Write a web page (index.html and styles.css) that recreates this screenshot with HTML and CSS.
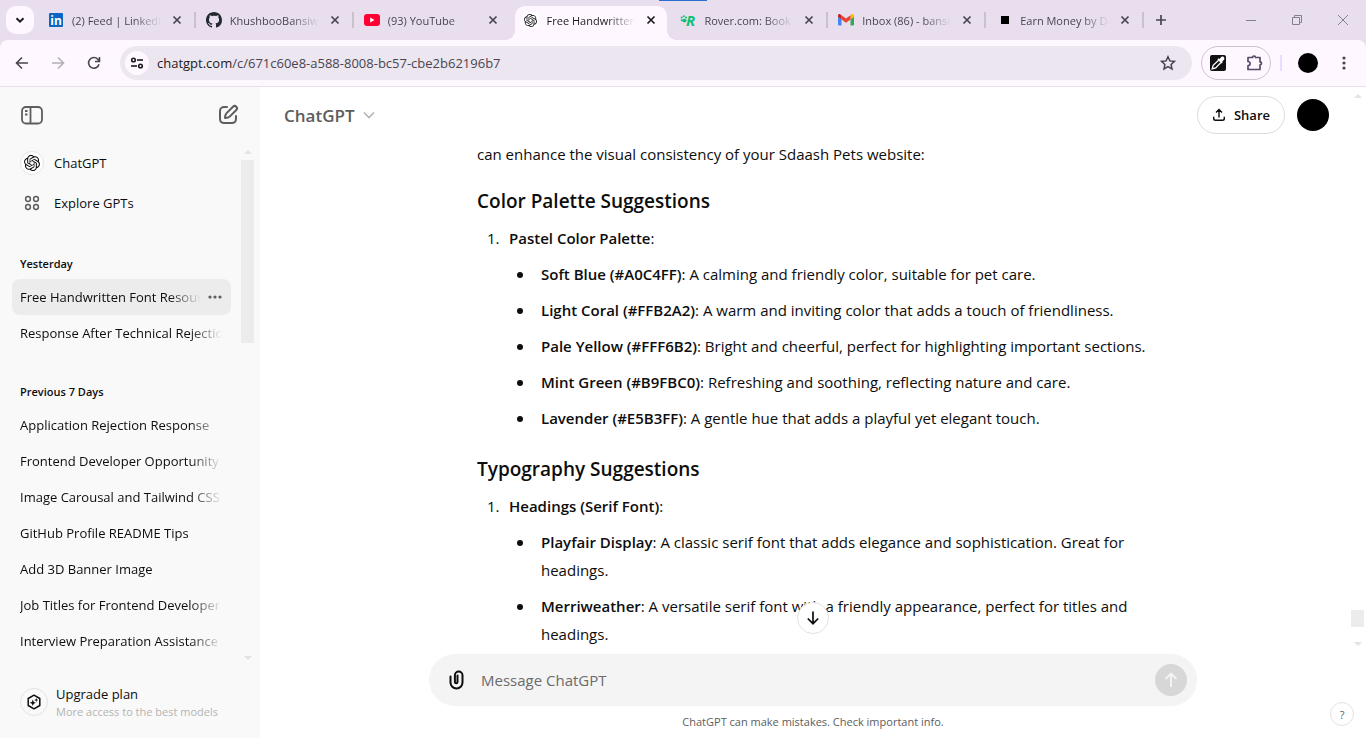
FILE: index.html
```html
<!DOCTYPE html>
<html lang="en">
<head>
<meta charset="utf-8">
<title>ChatGPT</title>
<link rel="stylesheet" href="styles.css">
</head>
<body>
<svg class="defs" aria-hidden="true">
  <symbol id="knot" viewBox="0 0 24 24"><path fill="currentColor" d="M22.2819 9.8211a5.9847 5.9847 0 0 0-.5157-4.9108 6.0462 6.0462 0 0 0-6.5098-2.9A6.0651 6.0651 0 0 0 4.9807 4.1818a5.9847 5.9847 0 0 0-3.9977 2.9 6.0462 6.0462 0 0 0 .7427 7.0966 5.98 5.98 0 0 0 .511 4.9107 6.051 6.051 0 0 0 6.5146 2.9001A5.9847 5.9847 0 0 0 13.2599 24a6.0557 6.0557 0 0 0 5.7718-4.2058 5.9894 5.9894 0 0 0 3.9977-2.9001 6.0557 6.0557 0 0 0-.7475-7.0729zm-9.022 12.6081a4.4755 4.4755 0 0 1-2.8764-1.0408l.1419-.0804 4.7783-2.7582a.7948.7948 0 0 0 .3927-.6813v-6.7369l2.02 1.1686a.071.071 0 0 1 .038.052v5.5826a4.504 4.504 0 0 1-4.4945 4.4944zm-9.6607-4.1254a4.4708 4.4708 0 0 1-.5346-3.0137l.142.0852 4.783 2.7582a.7712.7712 0 0 0 .7806 0l5.8428-3.3685v2.3324a.0804.0804 0 0 1-.0332.0615L9.74 19.9502a4.4992 4.4992 0 0 1-6.1408-1.6464zM2.3408 7.8956a4.485 4.485 0 0 1 2.3655-1.9728V11.6a.7664.7664 0 0 0 .3879.6765l5.8144 3.3543-2.0201 1.1685a.0757.0757 0 0 1-.071 0l-4.8303-2.7865A4.504 4.504 0 0 1 2.3408 7.872zm16.5963 3.8558L13.1038 8.364 15.1192 7.2a.0757.0757 0 0 1 .071 0l4.8303 2.7913a4.4944 4.4944 0 0 1-.6765 8.1042v-5.6772a.79.79 0 0 0-.407-.667zm2.0107-3.0231l-.142-.0852-4.7735-2.7818a.7759.7759 0 0 0-.7854 0L9.409 9.2297V6.8974a.0662.0662 0 0 1 .0284-.0615l4.8303-2.7866a4.4992 4.4992 0 0 1 6.6802 4.66zM8.3065 12.863l-2.02-1.1638a.0804.0804 0 0 1-.038-.0567V6.0742a4.4992 4.4992 0 0 1 7.3757-3.4537l-.142.0805L8.704 5.459a.7948.7948 0 0 0-.3927.6813zm1.0976-2.3654l2.602-1.4998 2.6069 1.4998v2.9994l-2.5974 1.4997-2.6067-1.4997Z"/></symbol>
  <symbol id="cross" viewBox="0 0 16 16"><path d="M4.5 4.5l7 7M11.5 4.5l-7 7" fill="none" stroke="currentColor" stroke-width="1.7"/></symbol>
</svg>

<header class="browser">
  <div class="tabstrip">
    <button class="tab-search" aria-label="Search tabs"><svg width="10" height="10" viewBox="0 0 10 10"><path d="M1.5 3.2L5 6.700l3.500-3.500" fill="none" stroke="#1d1b20" stroke-width="2"/></svg></button>
    <div class="tabs">
      <div class="tab">
        <svg class="favicon" viewBox="0 0 16 16"><rect x="1" y="1" width="14" height="14" rx="1" fill="#0a66c2"/><text class="logo-in" x="8" y="12.500" text-anchor="middle">in</text></svg>
        <span class="tab-title">(2) Feed | LinkedIn</span><button class="tab-close" aria-label="Close tab"><svg width="16" height="16"><use href="#cross"/></svg></button>
      </div>
      <div class="tab">
        <svg class="favicon" viewBox="0 0 16 16"><path fill="#24292f" d="M8 0C3.580 0 0 3.580 0 8c0 3.540 2.290 6.530 5.470 7.590.4.070.550-.170.550-.380 0-.190-.010-.820-.010-1.490-2.010.370-2.530-.490-2.690-.940-.090-.230-.480-.940-.820-1.130-.280-.150-.680-.520-.010-.530.630-.010 1.080.580 1.230.820.720 1.210 1.870.870 2.330.660.070-.520.280-.870.510-1.070-1.780-.2-3.640-.890-3.640-3.950 0-.870.310-1.590.820-2.150-.080-.2-.360-1.020.080-2.120 0 0 .670-.210 2.200.820.640-.180 1.320-.270 2-.270s1.360.090 2 .270c1.530-1.040 2.200-.820 2.200-.820.440 1.100.160 1.920.080 2.120.510.560.820 1.270.820 2.150 0 3.070-1.870 3.750-3.650 3.950.290.250.540.730.540 1.480 0 1.070-.010 1.930-.010 2.200 0 .210.150.460.550.380A8.010 8.010 0 0 0 16 8c0-4.420-3.580-8-8-8z"/></svg>
        <span class="tab-title">KhushbooBansiwal</span><button class="tab-close" aria-label="Close tab"><svg width="16" height="16"><use href="#cross"/></svg></button>
      </div>
      <div class="tab plain">
        <svg class="favicon" viewBox="0 0 16 16"><rect x="0" y="2" width="16" height="12" rx="3" fill="#ff0033"/><path d="M6.200 5.500v5l4.300-2.500z" fill="#fff"/></svg>
        <span class="tab-title">(93) YouTube</span><button class="tab-close" aria-label="Close tab"><svg width="16" height="16"><use href="#cross"/></svg></button>
      </div>
      <div class="tab active">
        <span class="favicon knot-tile"><svg width="13" height="13"><use href="#knot"/></svg></span>
        <span class="tab-title">Free Handwritten Font</span><button class="tab-close" aria-label="Close tab"><svg width="16" height="16"><use href="#cross"/></svg></button>
      </div>
      <div class="tab">
        <svg class="favicon" viewBox="0 0 16 16"><g fill="#0fbf73"><ellipse cx="4.400" cy="8.600" rx="2.200" ry="1.800"/><circle cx="1.700" cy="8.200" r="1"/><circle cx="1.700" cy="5.500" r="1"/><circle cx="3.900" cy="4.300" r="1"/><circle cx="6" cy="5.400" r="1"/></g><text class="logo-r" x="6" y="13.500">R</text></svg>
        <span class="tab-title">Rover.com: Book Sitters</span><button class="tab-close" aria-label="Close tab"><svg width="16" height="16"><use href="#cross"/></svg></button>
      </div>
      <div class="tab">
        <svg class="favicon" viewBox="0 0 16 16"><path fill="#4285f4" d="M1 13.500h2.500V7.300L0 4.800v7.700a1 1 0 0 0 1 1z"/><path fill="#34a853" d="M12.500 13.500H15a1 1 0 0 0 1-1V4.800l-3.500 2.500z"/><path fill="#fbbc04" d="M12.500 3.200v4.200L16 4.800V3.700c0-1.500-1.500-2-2.400-1.300z"/><path fill="#ea4335" d="M3.500 7.400V3.200L8 6.500l4.500-3.300v4.200L8 10.700z"/><path fill="#c5221f" d="M0 3.700v1.100l3.500 2.600V3.200L2.400 2.400C1.300 1.700 0 2.400 0 3.700z"/></svg>
        <span class="tab-title">Inbox (86) - bansiwal</span><button class="tab-close" aria-label="Close tab"><svg width="16" height="16"><use href="#cross"/></svg></button>
      </div>
      <div class="tab">
        <svg class="favicon" viewBox="0 0 16 16"><rect x="5" y="4" width="8" height="8"/></svg>
        <span class="tab-title">Earn Money by Doing</span><button class="tab-close" aria-label="Close tab"><svg width="16" height="16"><use href="#cross"/></svg></button>
      </div>
    </div>
    <button class="new-tab" aria-label="New tab"><svg width="12" height="12" viewBox="0 0 12 12"><path d="M6 1v10M1 6h10" stroke="#49454f" stroke-width="1.700"/></svg></button>
    <div class="window-controls">
      <button aria-label="Minimize"><svg width="12" height="12" viewBox="0 0 12 12"><path d="M1 6.500h10" stroke="#85808a"/></svg></button>
      <button aria-label="Restore"><svg width="12" height="12" viewBox="0 0 12 12"><path d="M1.500 3.500h7v7h-7zM3.500 3.500v-2h7v7h-2" fill="none" stroke="#85808a"/></svg></button>
      <button aria-label="Close"><svg width="12" height="12" viewBox="0 0 12 12"><path d="M1 1l10 10M11 1L1 11" stroke="#85808a"/></svg></button>
    </div>
  </div>
  <div class="toolbar">
    <div class="nav">
      <button aria-label="Back"><svg width="16" height="16" viewBox="0 0 16 16"><path d="M14 8H3M8 2.500L2.500 8 8 13.500" fill="none" stroke="#49454f" stroke-width="1.600"/></svg></button>
      <button aria-label="Forward"><svg width="16" height="16" viewBox="0 0 16 16"><path d="M2 8h11M8 2.500L13.500 8 8 13.500" fill="none" stroke="#b3adb7" stroke-width="1.600"/></svg></button>
      <button aria-label="Reload"><svg width="16" height="16" viewBox="0 0 16 16"><path d="M13 9.200A5.300 5.300 0 1 1 11.800 4.300L13.400 6M13.500 2v4.500H9" fill="none" stroke="#49454f" stroke-width="1.600"/></svg></button>
    </div>
    <div class="omnibox">
      <button class="site-info" aria-label="Site information"><svg width="14" height="14" viewBox="0 0 14 14"><g fill="none" stroke="#1d1b20" stroke-width="1.600"><circle cx="3.500" cy="4" r="1.800"/><path d="M7 4h6"/><circle cx="10.500" cy="10" r="1.800"/><path d="M1 10h6"/></g></svg></button>
      <span class="url"><b>chatgpt.com</b>/c/671c60e8-a588-8008-bc57-cbe2b62196b7</span>
      <button class="star" aria-label="Bookmark this tab"><svg width="16" height="16" viewBox="0 0 16 16"><path d="M8 1.700l1.900 4.200 4.600.500-3.400 3.100.900 4.500-4-2.300L4 14l.900-4.500L1.500 6.400l4.600-.500z" fill="none" stroke="#49454f" stroke-width="1.500"/></svg></button>
    </div>
    <div class="extensions">
      <button aria-label="Color picker"><svg width="16" height="16" viewBox="0 0 16 16"><rect width="16" height="16" rx="2" fill="#111"/><path d="M8.600 5.200L3.200 10.300 2.200 13.800l3.500-.9L10.900 7.500" fill="none" stroke="#fff" stroke-width="1.300"/><path d="M7.400 4.400l4.200 4.200 1.100-1.100-.6-.8 1.900-1.900c1.600-1.700-1-4.400-2.700-2.800L9.400 3.900l-.9-.6z" fill="#fff"/></svg></button>
      <button aria-label="Extensions"><svg width="18" height="18" viewBox="0 0 18 18"><path d="M3 3.500h4.500a1.500 1.500 0 0 1 3 0H15v4.300a1.500 1.500 0 0 1 0 3V15.500H3v-3.800a2.100 2.100 0 0 0 0-4.200z" fill="none" stroke="#5a4a68" stroke-width="1.700" stroke-linejoin="round"/></svg></button>
    </div>
    <span class="toolbar-rule"></span>
    <button class="profile" aria-label="Profile"></button>
    <button class="menu" aria-label="Menu"><svg width="4" height="16" viewBox="0 0 4 16" fill="#49454f"><circle cx="2" cy="3" r="1.600"/><circle cx="2" cy="8" r="1.600"/><circle cx="2" cy="13" r="1.600"/></svg></button>
  </div>
</header>

<div class="app">
  <aside class="sidebar">
    <div class="side-head">
      <button aria-label="Close sidebar"><svg width="24" height="24" viewBox="0 0 24 24" fill="none" stroke="#5d5d5d" stroke-width="1.800"><rect x="2" y="4" width="20" height="16.500" rx="4"/><path d="M10.500 4v16.500M5 8h2.500M5 11.500h2.500"/></svg></button>
      <button aria-label="New chat"><svg width="24" height="24" viewBox="0 0 24 24" fill="none" stroke="#5d5d5d" stroke-width="2" stroke-linecap="round"><path d="M11 4H8.500C5 4 4 5 4 8.500v7C4 19 5 20 8.500 20h7c3.500 0 4.500-1 4.500-4.500V13"/><path d="M9 15c0-2.500.5-3.800 1.600-4.900L17 3.700a2.300 2.300 0 0 1 3.300 3.300l-6.400 6.400C12.800 14.500 11.500 15 9 15z" stroke-linejoin="round"/></svg></button>
    </div>
    <div class="side-body">
      <nav class="side-list">
        <a class="gpt" href="#"><span class="gpt-badge"><svg width="16" height="16"><use href="#knot"/></svg></span>ChatGPT</a>
        <a class="gpt" href="#"><span class="gpt-icon"><svg width="16" height="16" viewBox="0 0 16 16" fill="none" stroke="#5d5d5d" stroke-width="1.500"><circle cx="4" cy="4" r="2.400"/><circle cx="12" cy="4" r="2.400"/><circle cx="4" cy="12" r="2.400"/><circle cx="12" cy="12" r="2.400"/></svg></span>Explore GPTs</a>
        <h2>Yesterday</h2>
        <div class="chat current"><a href="#">Free Handwritten Font Resources</a><button aria-label="Options"><svg width="14" height="4" viewBox="0 0 14 4" fill="#5d5d5d"><circle cx="2" cy="2" r="1.600"/><circle cx="7" cy="2" r="1.600"/><circle cx="12" cy="2" r="1.600"/></svg></button></div>
        <div class="chat"><a href="#">Response After Technical Rejection</a></div>
        <h2>Previous 7 Days</h2>
        <div class="chat"><a href="#">Application Rejection Response</a></div>
        <div class="chat"><a href="#">Frontend Developer Opportunity</a></div>
        <div class="chat"><a href="#">Image Carousal and Tailwind CSS</a></div>
        <div class="chat"><a href="#">GitHub Profile README Tips</a></div>
        <div class="chat"><a href="#">Add 3D Banner Image</a></div>
        <div class="chat"><a href="#">Job Titles for Frontend Developer</a></div>
        <div class="chat"><a href="#">Interview Preparation Assistance</a></div>
      </nav>
      <div class="scrollbar"><i class="up"></i><i class="thumb"></i><i class="down"></i></div>
    </div>
    <a class="upgrade" href="#">
      <span class="upgrade-icon"><svg width="16" height="16" viewBox="0 0 16 16"><path d="M8 1.200l5.800 3.300v7L8 14.800l-5.800-3.300v-7z" fill="none" stroke="#0d0d0d" stroke-width="1.500" stroke-linejoin="round"/><path d="M6.800 5.600l.9 2.300 2.300.9-2.300.9-.9 2.300-.9-2.300-2.300-.9 2.300-.9zM10.300 4l.6 1.400 1.400.600-1.400.600-.6 1.400-.6-1.400-1.400-.600 1.400-.600z" fill="#0d0d0d"/></svg></span>
      <span class="upgrade-text"><span>Upgrade plan</span><small>More access to the best models</small></span>
    </a>
  </aside>

  <main class="main">
    <div class="main-head">
      <button class="model">ChatGPT <svg width="12" height="8" viewBox="0 0 12 8"><path d="M1 1.500l5 5 5-5" fill="none" stroke="#b4b4b4" stroke-width="1.600"/></svg></button>
      <button class="share"><svg width="14" height="14" viewBox="0 0 14 14" fill="none" stroke="#0d0d0d" stroke-width="1.400"><path d="M7 9.500V2M4 4.500l3-3 3 3M1.700 8.800v1.700c0 1.300.6 1.800 1.800 1.800h7c1.200 0 1.800-.5 1.800-1.800V8.800"/></svg>Share</button>
      <button class="avatar" aria-label="Account"></button>
    </div>
    <div class="thread">
      <article class="message">
        <p>can enhance the visual consistency of your Sdaash Pets website:</p>
        <h3>Color Palette Suggestions</h3>
        <ol><li><div><strong>Pastel Color Palette</strong>:
          <ul>
            <li><div><strong>Soft Blue (#A0C4FF)</strong>: A calming and friendly color, suitable for pet care.</div></li>
            <li><div><strong>Light Coral (#FFB2A2)</strong>: A warm and inviting color that adds a touch of friendliness.</div></li>
            <li><div><strong>Pale Yellow (#FFF6B2)</strong>: Bright and cheerful, perfect for highlighting important sections.</div></li>
            <li><div><strong>Mint Green (#B9FBC0)</strong>: Refreshing and soothing, reflecting nature and care.</div></li>
            <li><div><strong>Lavender (#E5B3FF)</strong>: A gentle hue that adds a playful yet elegant touch.</div></li>
          </ul></div></li></ol>
        <h3>Typography Suggestions</h3>
        <ol><li><div><strong>Headings (Serif Font)</strong>:
          <ul>
            <li><div><strong>Playfair Display</strong>: A classic serif font that adds elegance and sophistication. Great for headings.</div></li>
            <li><div><strong>Merriweather</strong>: A versatile serif font with a friendly appearance, perfect for titles and headings.</div></li>
          </ul></div></li></ol>
      </article>
      <button class="to-bottom" aria-label="Scroll to bottom"><svg width="14" height="16" viewBox="0 0 14 16"><path d="M7 1.500v12M1.800 8.500L7 13.700l5.200-5.200" fill="none" stroke="#0d0d0d" stroke-width="1.700"/></svg></button>
    </div>
    <form class="composer">
      <button type="button" aria-label="Attach files"><svg width="24" height="24" viewBox="0 0 24 24" fill="none" stroke="#0d0d0d" stroke-width="2" stroke-linecap="round"><path d="M12.500 7.500V14a1.300 1.300 0 0 1-2.600 0V7.300a3.700 3.700 0 0 1 7.600 0V14.500a6 6 0 0 1-12 0V8.500"/></svg></button>
      <input type="text" placeholder="Message ChatGPT" aria-label="Message ChatGPT">
      <button class="send" type="button" aria-label="Send"><svg width="16" height="18" viewBox="0 0 16 18"><path d="M8 16V3M2.500 8L8 2.700 13.500 8" fill="none" stroke="#f4f4f4" stroke-width="2"/></svg></button>
    </form>
    <p class="notice">ChatGPT can make mistakes. Check important info.</p>
    <button class="help" aria-label="Help">?</button>
    <div class="scrollbar page-scroll"><i class="up"></i><i class="thumb"></i><i class="down"></i></div>
  </main>
</div>
</body>
</html>
```
FILE: styles.css
```css
* { box-sizing: border-box; }

body {
  margin: 0;
  height: 100vh;
  display: flex;
  flex-direction: column;
  overflow: hidden;
  background: #fff;
  color: #0d0d0d;
  font-family: "Open Sans", "Noto Sans", sans-serif;
  font-size: 15px;
}

button {
  display: flex;
  align-items: center;
  justify-content: center;
  padding: 0;
  border: 0;
  background: none;
  color: inherit;
  font: inherit;
}

a { color: inherit; text-decoration: none; }
svg { display: block; flex: none; }
.defs { position: absolute; width: 0; height: 0; }

/* Browser frame */
.browser { flex: none; background: #e8deee; }

.tabstrip {
  position: relative;
  display: flex;
  align-items: center;
  height: 40px;
  padding-left: 6px;
}
.tabstrip::before {
  content: "";
  position: absolute;
  top: 0;
  left: 659px;
  width: 48px;
  height: 1px;
  background: #2a6fd0;
}
.tab-search {
  flex: none;
  width: 28px;
  height: 28px;
  margin-right: 4px;
  border-radius: 10px;
  background: #fef7ff;
}
.tabs { display: flex; flex: 0 1 1106px; min-width: 0; }
.tab {
  position: relative;
  display: flex;
  flex: 1;
  align-items: center;
  gap: 8px;
  min-width: 0;
  height: 40px;
  padding: 0 11px 0 10px;
  color: #49454f;
  font-size: 11px;
}
.tab::after {
  content: "";
  position: absolute;
  right: 0;
  top: 12px;
  width: 2px;
  height: 16px;
  background: #c9c2cc;
}
.tab.plain::after { display: none; }
.favicon { flex: none; width: 16px; height: 16px; }
.tab-title {
  flex: 1;
  overflow: hidden;
  white-space: nowrap;
  -webkit-mask-image: linear-gradient(90deg, #000 calc(100% - 28px), transparent);
  mask-image: linear-gradient(90deg, #000 calc(100% - 28px), transparent);
}
.tab-close { flex: none; width: 16px; height: 16px; }
.tab.active {
  height: 34px;
  margin: 6px 3px 0;
  padding: 0 8px 6px 8px;
  border-radius: 10px 10px 0 0;
  background: #fef7ff;
  color: #1d1b20;
}
.tab.active::before,
.tab.active::after {
  content: "";
  position: absolute;
  top: auto;
  bottom: 0;
  width: 10px;
  height: 10px;
}
.tab.active::before { left: -10px; background: radial-gradient(circle at 0 0, #e8deee 10px, #fef7ff 10px); }
.tab.active::after { right: -10px; background: radial-gradient(circle at 100% 0, #e8deee 10px, #fef7ff 10px); }
.knot-tile { display: flex; align-items: center; justify-content: center; border-radius: 3px; background: #fff; }
.logo-in { fill: #fff; font: bold 12px "Open Sans", sans-serif; }
.logo-r { fill: #0fbf73; font: italic bold 15px "Open Sans", sans-serif; }
.new-tab { width: 34px; height: 28px; }
.window-controls { display: flex; margin-left: auto; }
.window-controls button { width: 46px; height: 40px; }

.toolbar {
  display: flex;
  align-items: center;
  height: 47px;
  padding-right: 12px;
  border-bottom: 1px solid #e7e0ea;
  border-radius: 8px 8px 0 0;
  background: #fef7ff;
}
.nav { display: flex; margin: 0 8px 0 4px; }
.nav button { width: 36px; height: 34px; }
.omnibox {
  display: flex;
  flex: 1;
  align-items: center;
  height: 34px;
  padding: 0 16px 0 5px;
  border-radius: 17px;
  background: #ece6f0;
}
.site-info { width: 24px; height: 24px; margin-right: 8px; border-radius: 50%; background: #fef7ff; }
.url { flex: 1; color: #49454f; font-size: 13px; }
.url b { color: #1d1b20; font-weight: 400; }
.extensions {
  display: flex;
  align-items: center;
  justify-content: space-between;
  width: 70px;
  height: 34px;
  margin-left: 9px;
  padding: 0 7px 0 8px;
  border: 1px solid #cac4d0;
  border-radius: 17px;
}
.toolbar-rule { width: 2px; height: 16px; margin: 0 16px 0 9px; background: #eaddff; }
.profile { width: 20px; height: 20px; border-radius: 50%; background: #000; }
.menu { width: 20px; height: 28px; margin-left: 16px; }

/* Application */
.app { display: flex; flex: 1; min-height: 0; }

.sidebar {
  display: flex;
  flex: none;
  flex-direction: column;
  width: 260px;
  background: #f9f9f9;
  font-size: 13px;
}
.side-head { display: flex; justify-content: space-between; padding: 16px 20px; }
.side-body { display: flex; flex: 1; min-height: 0; }
.side-list { flex: 1; min-width: 0; padding: 0 10px 0 12px; overflow: hidden; }
.gpt { display: flex; align-items: center; gap: 10px; height: 40px; padding-left: 8px; }
.gpt-badge, .gpt-icon { display: flex; align-items: center; justify-content: center; width: 24px; height: 24px; }
.gpt-badge { border: 1px solid #e5e5e5; border-radius: 50%; background: #fff; }
.side-list h2 { margin: 26px 0 0; padding-left: 8px; font-size: 11px; font-weight: 600; line-height: 30px; }
.chat { display: flex; align-items: center; height: 36px; padding: 0 9px 0 8px; border-radius: 8px; }
.chat a {
  flex: 1;
  overflow: hidden;
  white-space: nowrap;
  -webkit-mask-image: linear-gradient(90deg, #000 calc(100% - 32px), transparent);
  mask-image: linear-gradient(90deg, #000 calc(100% - 32px), transparent);
}
.chat.current { background: #ececec; }
.chat.current button { margin-left: 7px; }

.scrollbar { display: flex; flex-direction: column; align-items: center; width: 13px; margin: 7px 6px 0 0; }
.scrollbar .up, .scrollbar .down { border: 4px solid transparent; }
.scrollbar .up { border-top: 0; border-bottom-color: #e3e3e3; }
.scrollbar .down { margin-top: auto; border-bottom: 0; border-top-color: #e3e3e3; }
.scrollbar .thumb { width: 100%; height: 183px; margin-top: 6px; background: #ececec; }

.upgrade { display: flex; align-items: center; gap: 8px; padding: 24px 20px 18px; }
.upgrade-icon { display: flex; align-items: center; justify-content: center; width: 28px; height: 28px; border: 1px solid #e3e3e3; border-radius: 50%; }
.upgrade-text { display: flex; flex-direction: column; line-height: 20px; }
.upgrade-text small { color: #b4b4b4; font-size: 11px; line-height: 16px; }

.main { position: relative; display: flex; flex: 1; flex-direction: column; min-width: 0; }
.main-head { display: flex; align-items: center; padding: 9px 37px 6px 24px; }
.model { gap: 8px; margin-right: auto; color: #5d5d5d; font-size: 17px; font-weight: 600; }
.share { gap: 8px; width: 88px; height: 38px; margin-right: 12px; border: 1px solid #dcdcdc; border-radius: 19px; font-size: 13px; font-weight: 600; }
.avatar { width: 32px; height: 32px; border-radius: 50%; background: #000; }

.thread { position: relative; flex: 1; min-height: 0; overflow: hidden; }
.message { max-width: 688px; margin: 0 auto; padding-left: 8px; line-height: 28px; }
.message p { margin: 0; }
.message h3 { margin: 23px 0 9px; font-size: 19px; font-weight: 600; }
.message p + h3 { margin-top: 19px; }
.message ol, .message ul { margin: 0; padding: 0; list-style: none; }
.message strong { font-weight: 600; }
.message li { display: flex; }
.message ol > li::before { content: "1."; flex: none; width: 22px; margin-left: 10px; }
.message ul > li { margin-top: 8px; }
.message ul > li::before {
  content: "";
  flex: none;
  width: 6px;
  height: 6px;
  margin: 12px 18px 0 8px;
  border-radius: 50%;
  background: #0d0d0d;
}
.to-bottom {
  position: absolute;
  left: 50%;
  bottom: 14px;
  width: 32px;
  height: 32px;
  margin-left: -16px;
  border: 1px solid #e3e3e3;
  border-radius: 50%;
  background: #fff;
}

.composer {
  display: flex;
  align-items: center;
  align-self: center;
  width: 768px;
  max-width: 100%;
  height: 52px;
  margin-top: 6px;
  padding: 0 10px 0 16px;
  border-radius: 26px;
  background: #f4f4f4;
}
.composer input { flex: 1; margin: 0 12px; padding: 0; border: 0; outline: 0; background: none; color: #0d0d0d; font: inherit; }
.composer input::placeholder { color: #6b6b6b; opacity: 1; }
.send { width: 32px; height: 32px; border-radius: 50%; background: #d7d7d7; }
.notice { margin: 0; color: #5d5d5d; font-size: 11px; line-height: 32px; text-align: center; }
.help {
  position: absolute;
  right: 12px;
  bottom: 12px;
  width: 24px;
  height: 24px;
  border: 1px solid #e3e3e3;
  border-radius: 50%;
  color: #5d5d5d;
  font-size: 11px;
}
.page-scroll { position: absolute; top: 0; right: 2px; bottom: 92px; margin-right: 0; }
.page-scroll .thumb { height: 17px; margin-top: auto; }
.page-scroll .down { margin-top: 15px; }
```
